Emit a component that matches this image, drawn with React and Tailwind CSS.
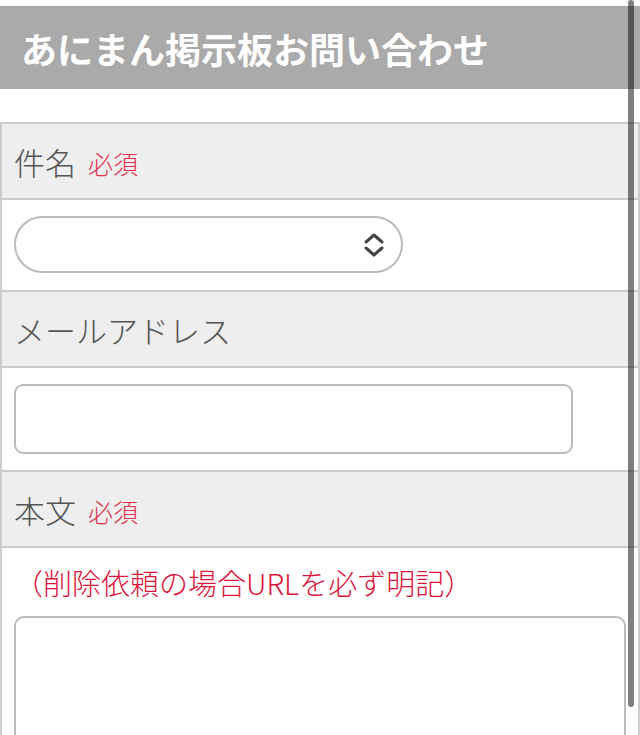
import React from "react";

function Label({ text, required }) {
  return (
    <div className="h-[76px] bg-[#eeeeee] border-b-2 border-[#cccccc] flex items-center pl-[12px]">
      <span className="text-[31px] font-light text-[#555555] leading-none">{text}</span>
      {required && (
        <span className="ml-[12px] mt-[4px] text-[25px] font-light text-[#e23150] leading-none">必須</span>
      )}
    </div>
  );
}

export default function App() {
  return (
    <div className="relative w-[640px] h-[735px] overflow-hidden bg-white font-['Noto_Sans_CJK_JP',sans-serif]">
      <div className="mt-[6px] h-[83px] bg-[#aaaaaa] flex items-center pl-[21px]">
        <h1 className="text-white text-[36px] font-semibold leading-none">
          あにまん掲示板お問い合わせ
        </h1>
      </div>

      <div className="mt-[33px] border-2 border-b-0 border-[#cccccc]">
        <Label text="件名" required />
        <div className="h-[92px] border-b-2 border-[#cccccc] pt-[16px] pl-[12px]">
          <div className="w-[389px] h-[57px] rounded-full border-2 border-[#bbbbbb] flex items-center justify-end pr-[16px]">
            <svg width="22" height="26" viewBox="0 0 22 26" fill="none" stroke="#444444" strokeWidth="3" strokeLinecap="round" strokeLinejoin="round">
              <polyline points="3,10 11,3 19,10" />
              <polyline points="3,16 11,23 19,16" />
            </svg>
          </div>
        </div>

        <Label text="メールアドレス" />
        <div className="h-[104px] border-b-2 border-[#cccccc] pt-[16px] pl-[12px]">
          <input
            type="text"
            className="block w-[559px] h-[70px] rounded-[9px] border-2 border-[#bbbbbb] bg-white outline-none"
          />
        </div>

        <Label text="本文" required />
        <div className="pt-[12px] pl-[12px] pr-[12px]">
          <p className="text-[29px] font-light leading-[44px] text-[#dc143c]">（削除依頼の場合URLを必ず明記）</p>
          <textarea className="block mt-[12px] w-[612px] h-[200px] rounded-[10px] border-2 border-[#bbbbbb] bg-white outline-none resize-none" />
        </div>
      </div>

      <div className="absolute top-0 right-[6px] w-[6px] h-[707px] rounded-full bg-black/50" />
    </div>
  );
}
